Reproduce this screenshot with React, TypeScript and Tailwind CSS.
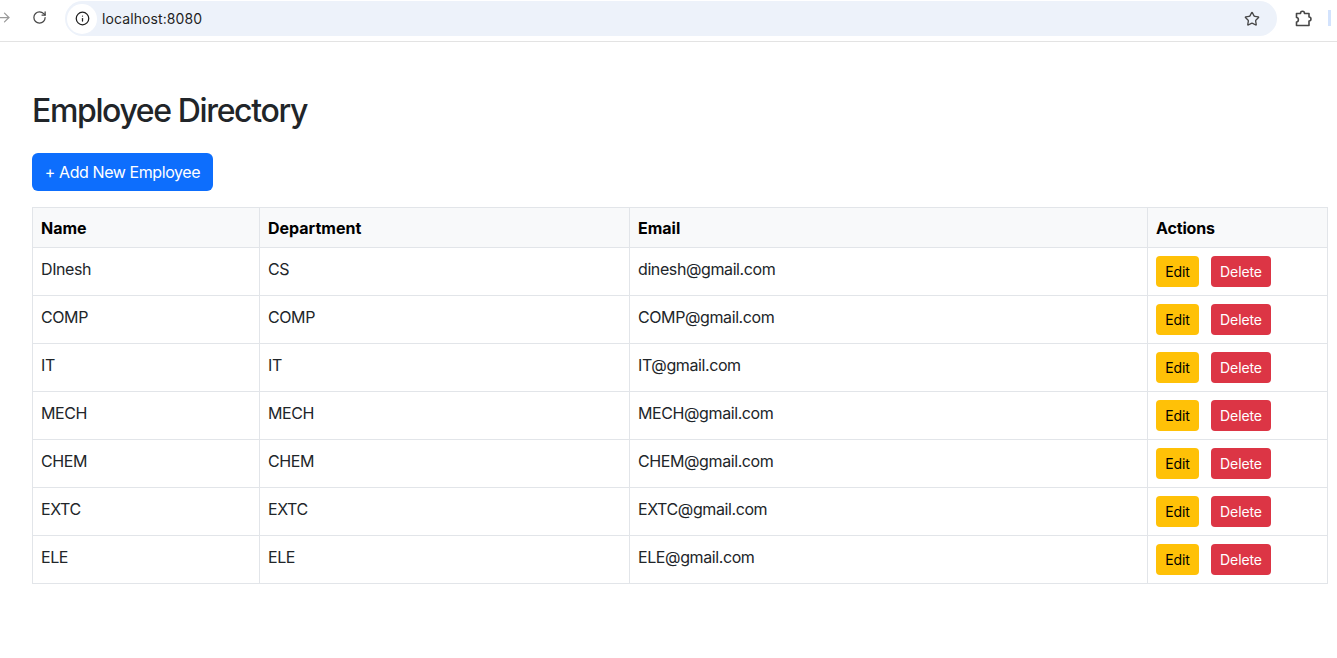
import { ArrowRight, Info, RotateCw, Star } from "lucide-react";

const employees = [
  { name: "DInesh", department: "CS", email: "dinesh@gmail.com" },
  { name: "COMP", department: "COMP", email: "COMP@gmail.com" },
  { name: "IT", department: "IT", email: "IT@gmail.com" },
  { name: "MECH", department: "MECH", email: "MECH@gmail.com" },
  { name: "CHEM", department: "CHEM", email: "CHEM@gmail.com" },
  { name: "EXTC", department: "EXTC", email: "EXTC@gmail.com" },
  { name: "ELE", department: "ELE", email: "ELE@gmail.com" },
];

function BrowserBar() {
  return (
    <div className="h-[42px] flex items-start border-b border-[#e3e3e3] bg-white overflow-hidden">
      <div className="w-[65px] h-[36px] shrink-0 relative">
        <ArrowRight size={15} className="absolute left-[-3px] top-[10px] text-[#9a9a9a]" />
        <RotateCw size={15} strokeWidth={2} className="absolute left-[32px] top-[10px] text-[#474747]" />
      </div>
      <div className="mt-[1px] w-[1212px] h-[35px] rounded-full bg-[#edf2fa] flex items-center shrink-0 pl-[2px] pr-[17px]">
        <div className="w-[30px] h-[30px] rounded-full bg-white flex items-center justify-center">
          <Info size={15} strokeWidth={2} className="text-[#1f1f1f]" />
        </div>
        <span className="ml-[5px] text-[14px] text-[#1f1f1f] tracking-[0.1px]">localhost:8080</span>
        <Star size={16} strokeWidth={2} className="ml-auto text-[#474747]" />
      </div>
      <div className="ml-[18px] h-[36px] flex items-center shrink-0">
        <svg width="17" height="17" viewBox="0 0 17 17" fill="none" stroke="#474747" strokeWidth="1.6" strokeLinejoin="round">
          <path d="M1.5 3.5h4c0-3 4-3 4 0h4.500v3.500c2.600 0 2.600 4 0 4v4.500h-12.500v-3.500c2.500 0 2.500-4.500 0-4.500z" />
        </svg>
      </div>
      <div className="ml-[16px] mt-[10px] w-[3px] h-[16px] bg-[#d3e3fd] shrink-0" />
    </div>
  );
}

function Row({ name, department, email }: { name: string; department: string; email: string }) {
  return (
    <tr className="h-[48px]">
      <td className="border border-[#e2e5e9] px-2 pt-[9px] pb-0 align-top leading-6 tracking-[-0.4px]">{name}</td>
      <td className="border border-[#e2e5e9] px-2 pt-[9px] pb-0 align-top leading-6 tracking-[-0.4px]">{department}</td>
      <td className="border border-[#e2e5e9] px-2 pt-[9px] pb-0 align-top leading-6 tracking-[-0.4px]">{email}</td>
      <td className="border border-[#e2e5e9] px-2 pt-2 pb-0 align-top leading-6">
        <div className="flex gap-3">
          <button className="h-[31px] w-[43px] rounded bg-[#ffc107] text-black text-sm tracking-[-0.1px]">Edit</button>
          <button className="h-[31px] w-[60px] rounded bg-[#dc3545] text-white text-sm tracking-[-0.1px]">Delete</button>
        </div>
      </td>
    </tr>
  );
}

export default function App() {
  return (
    <div className="min-h-[658px] bg-white text-[#212529] font-['Inter',sans-serif] overflow-hidden">
      <BrowserBar />
      <main className="pl-8 pr-[9px] pt-[50px]">
        <h1 className="text-[32px] leading-[38px] font-medium tracking-[-1.37px]">Employee Directory</h1>
        <button className="mt-[23px] h-[38px] w-[181px] rounded-md bg-[#0d6efd] text-white text-base tracking-[-0.42px] block">+ Add New Employee</button>
        <table className="mt-4 w-full border-collapse table-fixed text-base text-[#212529]">
          <colgroup>
            <col className="w-[227px]" />
            <col className="w-[370px]" />
            <col className="w-[518px]" />
            <col />
          </colgroup>
          <thead>
            <tr className="h-[40px] bg-[#f8f9fa] text-black">
              <th className="border border-[#e2e5e9] px-2 text-left font-bold">Name</th>
              <th className="border border-[#e2e5e9] px-2 text-left font-bold">Department</th>
              <th className="border border-[#e2e5e9] px-2 text-left font-bold">Email</th>
              <th className="border border-[#e2e5e9] px-2 text-left font-bold tracking-[-0.15px]">Actions</th>
            </tr>
          </thead>
          <tbody>
            {employees.map((e) => (
              <Row key={e.email} {...e} />
            ))}
          </tbody>
        </table>
      </main>
    </div>
  );
}
